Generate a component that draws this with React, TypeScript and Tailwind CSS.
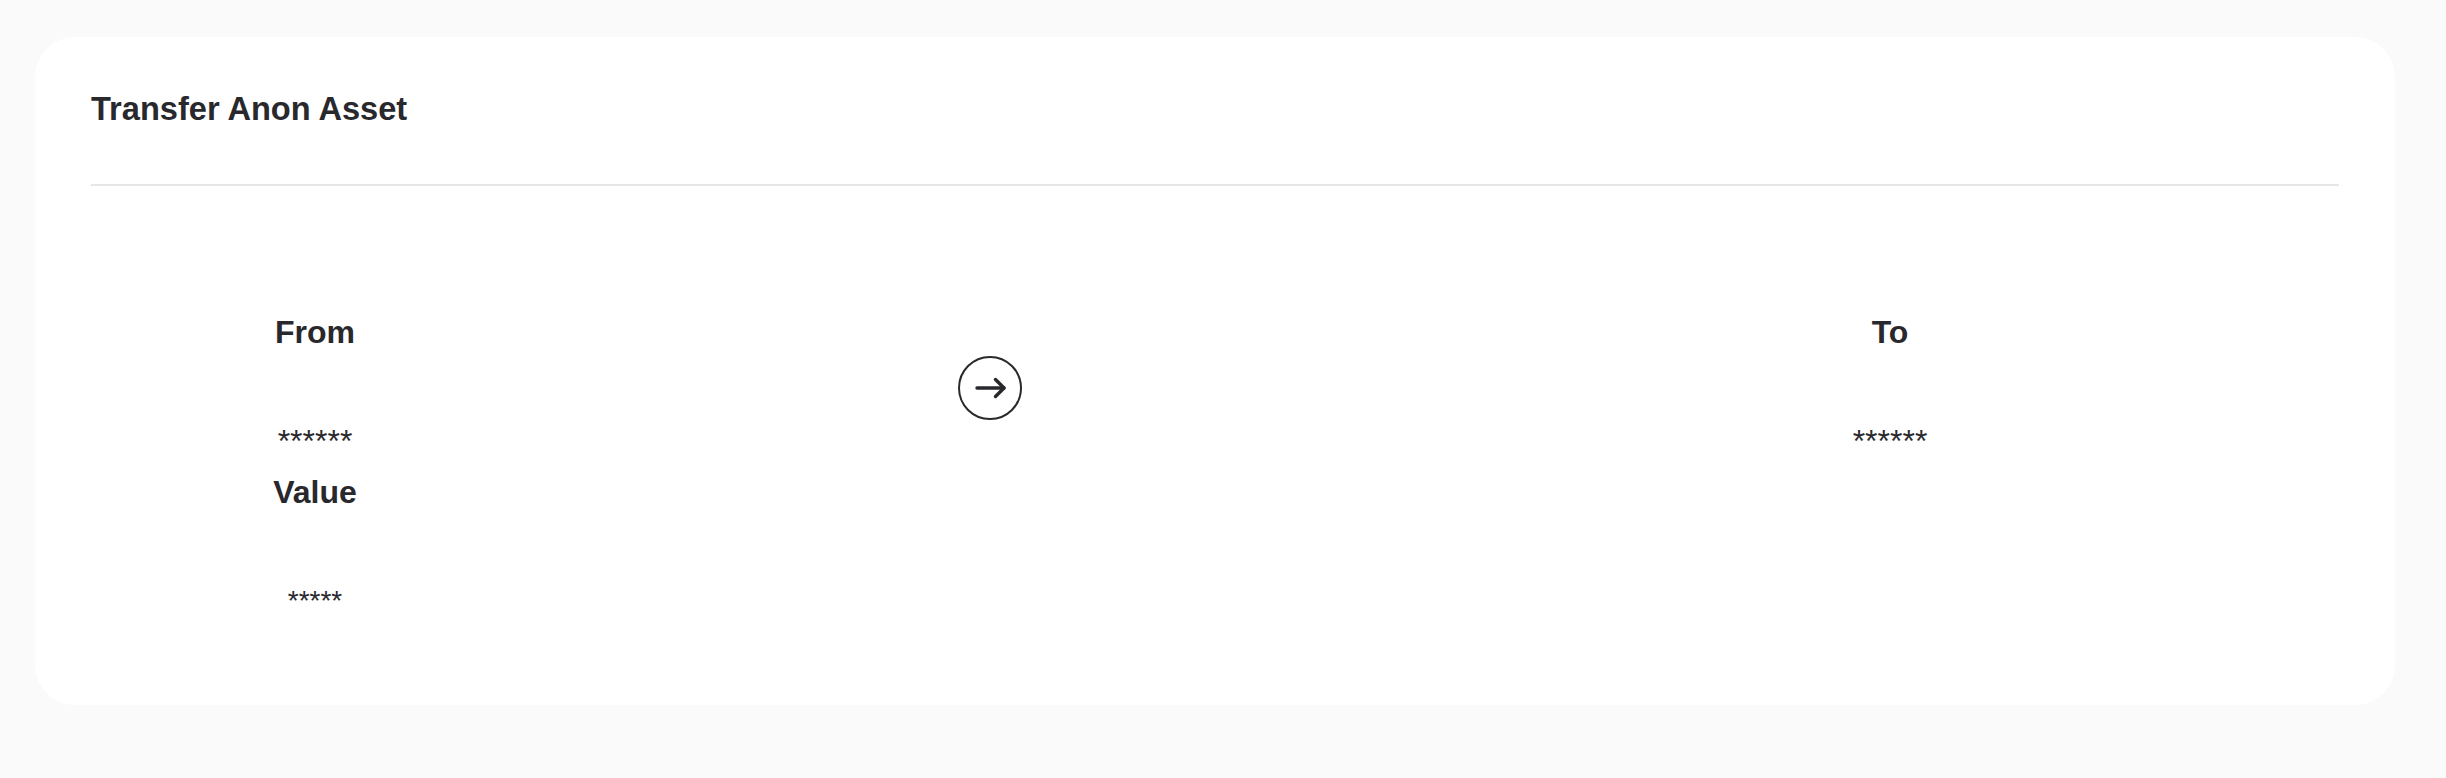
import React from "react";

function ArrowCircle() {
  return (
    <svg width="64" height="64" viewBox="0 0 64 64" fill="none">
      <circle cx="32" cy="32" r="31" stroke="#28282d" strokeWidth="2" />
      <path d="M19 32h27" stroke="#28282d" strokeWidth="3.4" strokeLinecap="round" />
      <path d="M37.5 23.5 46 32l-8.5 8.5" stroke="#28282d" strokeWidth="3.4" strokeLinecap="round" strokeLinejoin="round" />
    </svg>
  );
}

export default function App() {
  const font = { fontFamily: '"Liberation Sans", Arial, Helvetica, sans-serif' };
  return (
    <div className="min-h-screen bg-[#fafafb] pt-[37px] pl-[35px] pr-[51px] text-[#28282d]" style={font}>
      <div className="bg-white rounded-[40px] px-[56px] pt-[48px] pb-[74px]">
        <h1 className="text-[32.6px] leading-[48px] font-bold">Transfer Anon Asset</h1>
        <div className="mt-[51px] h-[2px] bg-[#e6e6e6]" />
        <div className="mt-[122px] grid grid-cols-[448px_902px_1fr]">
          <div className="flex flex-col items-center">
            <div className="text-[32px] leading-[48px] font-bold">From</div>
            <div className="mt-[61px] mb-[3px] text-[32px] leading-[48px]">******</div>
          </div>
          <div className="self-center flex items-center justify-center">
            <ArrowCircle />
          </div>
          <div className="flex flex-col items-center">
            <div className="text-[32px] leading-[48px] font-bold">To</div>
            <div className="mt-[61px] mb-[3px] text-[32px] leading-[48px]">******</div>
          </div>
          <div className="flex flex-col items-center">
            <div className="text-[32px] leading-[48px] font-bold">Value</div>
            <div className="mt-[61px] mb-[6px] text-[28px] leading-[48px]">*****</div>
          </div>
        </div>
      </div>
    </div>
  );
}
